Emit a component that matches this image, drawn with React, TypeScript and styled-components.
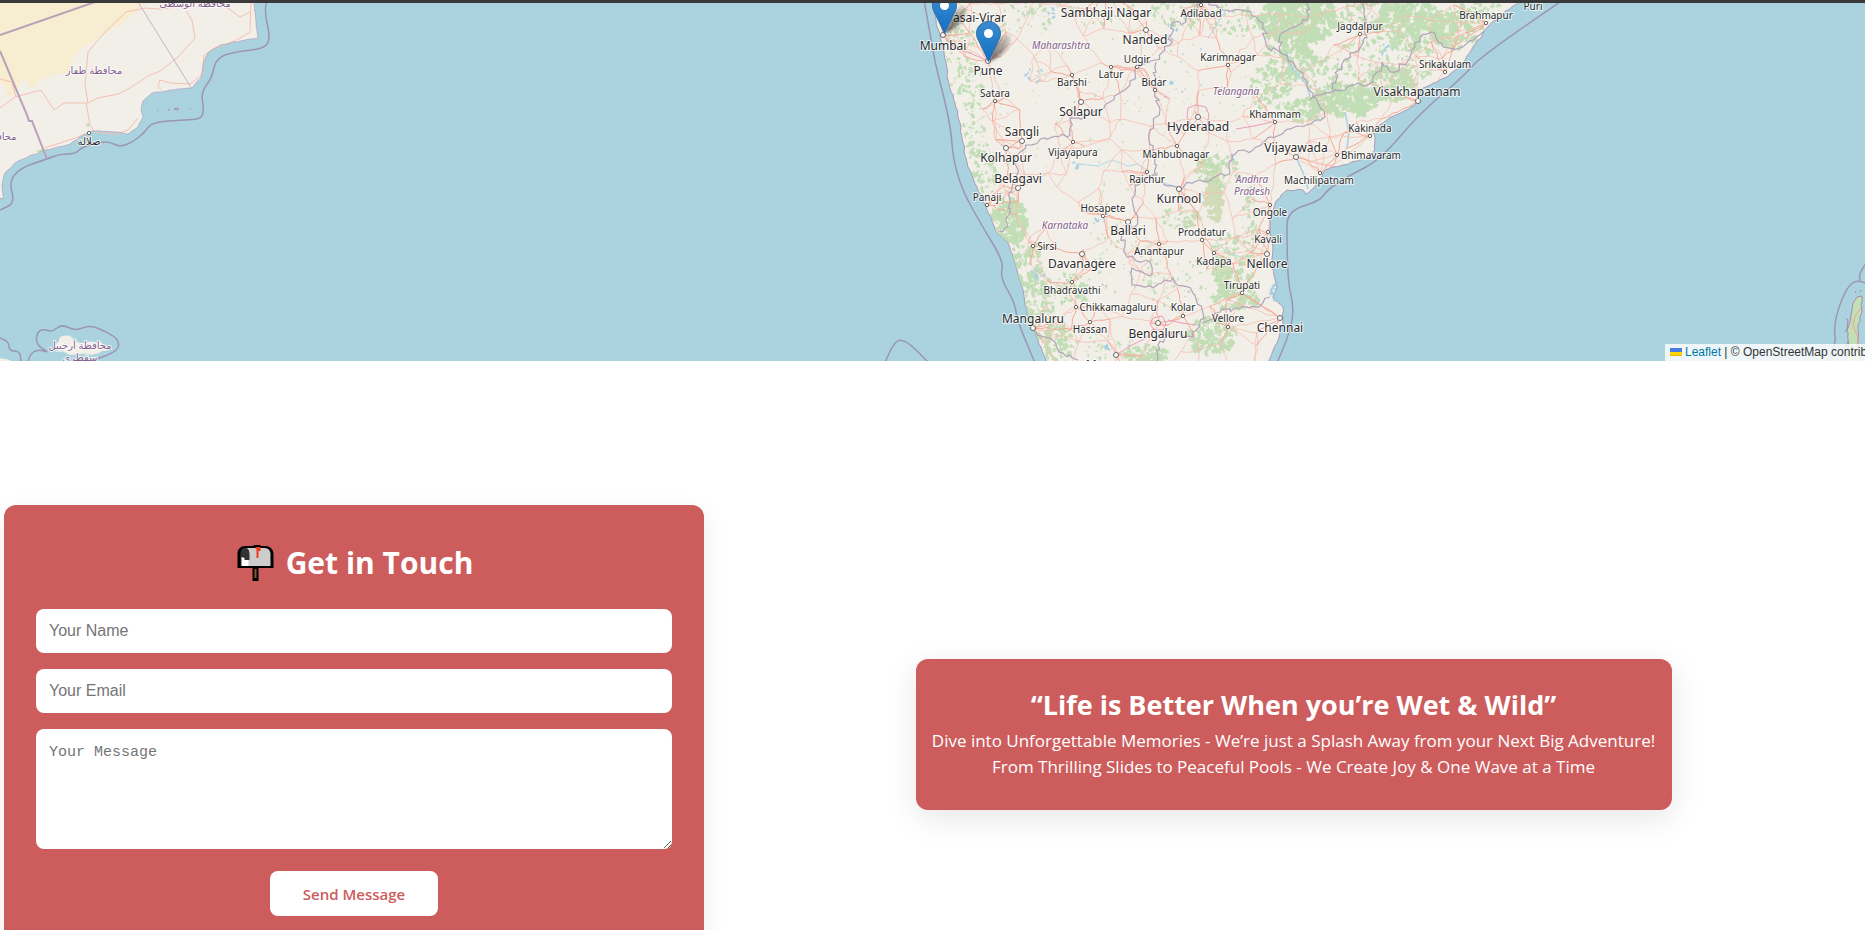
import React from 'react';
import styled, { createGlobalStyle } from 'styled-components';

const GlobalStyle = createGlobalStyle`
  *, *::before, *::after { box-sizing: border-box; }
  html { scrollbar-width: none; }
  body {
    margin: 0;
    background: #fff;
    font-family: 'Open Sans', 'Noto Sans', sans-serif;
    overflow-x: hidden;
  }
`;

/* ---------- map data ---------- */

type Point = [number, number];

const makeRandom = (seed: number) => {
  let s = seed;
  return () => {
    s = (s * 1664525 + 1013904223) % 4294967296;
    return s / 4294967296;
  };
};

const toPath = (pts: Point[], close = false) =>
  'M' + pts.map(([x, y]) => `${x.toFixed(1)} ${y.toFixed(1)}`).join('L') + (close ? 'Z' : '');

const roughen = (pts: Point[], amount: number, step: number, seed: number): Point[] => {
  const rnd = makeRandom(seed);
  const out: Point[] = [pts[0]];
  for (let i = 1; i < pts.length; i += 1) {
    const [x0, y0] = pts[i - 1];
    const [x1, y1] = pts[i];
    const n = Math.max(1, Math.round(Math.hypot(x1 - x0, y1 - y0) / step));
    for (let k = 1; k < n; k += 1) {
      const t = k / n;
      out.push([
        x0 + (x1 - x0) * t + (rnd() - 0.5) * amount,
        y0 + (y1 - y0) * t + (rnd() - 0.5) * amount,
      ]);
    }
    out.push([x1, y1]);
  }
  return out;
};

/* quadratic smoothing through the midpoints of a line */
const toSmoothPath = (pts: Point[]) => {
  let d = `M${pts[0][0]} ${pts[0][1]}`;
  for (let i = 1; i < pts.length - 1; i += 1) {
    const [x, y] = pts[i];
    const [nx, ny] = pts[i + 1];
    d += `Q${x} ${y} ${(x + nx) / 2} ${(y + ny) / 2}`;
  }
  const last = pts[pts.length - 1];
  return `${d}L${last[0]} ${last[1]}`;
};

const westCoast: Point[] = [
  [932, 0], [936, 20], [942, 43], [946, 63], [948, 80], [955, 103], [960, 123], [963, 143], [968, 167],
  [977, 187], [984, 203], [992, 220], [995, 230], [1008, 243], [1017, 270], [1023, 290], [1027, 313],
  [1032, 327], [1038, 340], [1047, 363],
];
const eastCoast: Point[] = [
  [1268, 363], [1277, 343], [1283, 323], [1283, 307], [1273, 297], [1277, 287], [1272, 267], [1273, 247],
  [1270, 230], [1271, 213], [1277, 200], [1287, 190], [1303, 190], [1306, 194], [1315, 187], [1325, 170],
  [1343, 165], [1367, 158], [1375, 150], [1375, 137], [1372, 130], [1387, 120], [1415, 105], [1423, 88],
  [1447, 77], [1463, 63], [1473, 47], [1487, 28], [1503, 13], [1523, 0],
];
const india = toPath(roughen([...westCoast, ...eastCoast], 1.6, 4, 3), true);

const omanCoast: Point[] = [
  [254, 0], [255, 12], [256, 25], [258, 38], [245, 40], [220, 45], [208, 53], [204, 62], [201, 78], [192, 88],
  [170, 90], [152, 93], [143, 101], [141, 110], [143, 117], [138, 127], [128, 134], [115, 132], [92, 131],
  [80, 137], [70, 144], [45, 150], [28, 157], [15, 163], [5, 173], [2, 185], [3, 199], [0, 198],
];
const oman = toPath([[0, 0], ...roughen(omanCoast, 1, 4, 8)], true);
const desert = toPath(
  roughen([[0, 0], [152, 0], [128, 18], [108, 32], [88, 44], [75, 55], [68, 72], [45, 77], [33, 88], [22, 79], [14, 94], [7, 97], [5, 86], [0, 84]], 2, 5, 4),
  true,
);
const socotra = toPath(roughen([[54, 347], [60, 337], [70, 336], [80, 343], [100, 341], [109, 349], [95, 354], [70, 355]], 2, 4, 6), true);
const andaman = toPath(
  roughen([[1853, 303], [1857, 297], [1862, 296], [1862, 312], [1858, 325], [1858, 343], [1861, 363], [1845, 363], [1849, 345], [1847, 330], [1850, 322]], 2, 4, 7),
  true,
);

const seaBorders: Point[][] = [
  [[267, 0], [264, 10], [270, 36], [267, 46], [255, 50], [240, 51], [216, 57], [212, 78], [201, 92], [204, 110], [201, 119], [185, 120], [152, 122], [145, 132], [133, 142], [120, 147], [110, 142], [100, 142], [82, 147], [75, 154], [60, 154], [47, 159], [20, 168], [9, 182], [15, 203], [0, 210]],
  [[924, 0], [930, 33], [935, 63], [944, 97], [951, 130], [953, 158], [962, 190], [982, 226], [1004, 262], [1000, 277], [1015, 303], [1017, 320], [1035, 363]],
  [[1563, 0], [1482, 55], [1463, 77], [1420, 113], [1380, 160], [1350, 175], [1327, 190], [1320, 201], [1287, 211], [1287, 240], [1288, 283], [1294, 308], [1290, 332], [1277, 363]],
  [[28, 363], [29, 355], [38, 349], [50, 353], [36, 345], [37, 332], [44, 329], [52, 332], [62, 324], [75, 331], [90, 325], [107, 332], [119, 340], [118, 351], [97, 359]],
  [[0, 338], [9, 341], [9, 351], [20, 351], [21, 363]],
  [[885, 363], [893, 342], [905, 339], [929, 363]],
  [[1867, 262], [1859, 273], [1860, 281]],
  [[1867, 284], [1858, 279], [1847, 287], [1837, 312], [1834, 330], [1836, 343], [1826, 363]],
];

const landBorders: Point[][] = [
  [[1200, 0], [1186, 22], [1172, 23], [1170, 45], [1155, 60], [1140, 66], [1125, 90], [1105, 105], [1085, 117], [1070, 118], [1070, 135], [1045, 138], [1030, 145], [1015, 155], [1017, 175], [1012, 187], [1008, 195], [1008, 226], [998, 231]],
  [[1156, 62], [1155, 90], [1160, 110], [1150, 130], [1152, 155], [1156, 175], [1135, 185], [1133, 205], [1137, 225], [1122, 235], [1127, 257], [1150, 262], [1152, 275], [1132, 268], [1132, 285], [1153, 288], [1173, 278], [1195, 295], [1203, 313], [1193, 337], [1172, 332], [1158, 345], [1156, 363]],
  [[1203, 322], [1220, 312], [1240, 308], [1260, 306], [1270, 297]],
  [[1035, 331], [1050, 338], [1063, 353], [1078, 360]],
  [[1200, 0], [1223, 10], [1250, 11], [1263, 23], [1267, 47], [1280, 52], [1303, 73], [1313, 97], [1325, 117], [1297, 126], [1270, 137], [1253, 150], [1232, 155], [1230, 173], [1213, 178], [1200, 180], [1180, 188], [1156, 181]],
  [[1310, 100], [1333, 92], [1347, 87], [1373, 82], [1382, 62], [1390, 72], [1407, 62], [1420, 38], [1432, 32], [1443, 47], [1460, 48], [1483, 32]],
  [[1333, 92], [1338, 70], [1363, 43], [1368, 25], [1362, 0]],
  [[1280, 52], [1282, 33], [1307, 20], [1308, 0]],
];

interface City { name: string; x: number; y: number; dx: number; dy: number; big?: boolean }

const cities: City[] = [
  { name: 'Vasai-Virar', x: 976, y: 22, dx: 942, dy: -6, big: true },
  { name: 'Mumbai', x: 943, y: 50, dx: 943, dy: 35, big: true },
  { name: 'Pune', x: 988, y: 75, dx: 988, dy: 61, big: true },
  { name: 'Sambhaji Nagar', x: 1106, y: 17, dx: 1106, dy: -8, big: true },
  { name: 'Nanded', x: 1145, y: 44, dx: 1146, dy: 30, big: true },
  { name: 'Udgir', x: 1137, y: 63, dx: 1137, dy: 67 },
  { name: 'Latur', x: 1111, y: 78, dx: 1111, dy: 67 },
  { name: 'Barshi', x: 1072, y: 86, dx: 1072, dy: 75 },
  { name: 'Bidar', x: 1154, y: 86, dx: 1155, dy: 90 },
  { name: 'Satara', x: 995, y: 97, dx: 995, dy: 101 },
  { name: 'Solapur', x: 1081, y: 116, dx: 1081, dy: 102, big: true },
  { name: 'Sangli', x: 1022, y: 136, dx: 1022, dy: 141, big: true },
  { name: 'Kolhapur', x: 1006, y: 162, dx: 1006, dy: 148, big: true },
  { name: 'Vijayapura', x: 1073, y: 156, dx: 1073, dy: 142 },
  { name: 'Mahbubnagar', x: 1176, y: 158, dx: 1177, dy: 146 },
  { name: 'Raichur', x: 1147, y: 183, dx: 1147, dy: 172 },
  { name: 'Belagavi', x: 1018, y: 183, dx: 1018, dy: 188, big: true },
  { name: 'Hyderabad', x: 1198, y: 131, dx: 1198, dy: 117, big: true },
  { name: 'Adilabad', x: 1201, y: 17, dx: 1201, dy: 5 },
  { name: 'Karimnagar', x: 1228, y: 61, dx: 1228, dy: 65 },
  { name: 'Jagdalpur', x: 1360, y: 30, dx: 1360, dy: 34 },
  { name: 'Brahmapur', x: 1486, y: 19, dx: 1486, dy: 23 },
  { name: 'Puri', x: 1533, y: 10, dx: 1533, dy: -8 },
  { name: 'Srikakulam', x: 1445, y: 68, dx: 1445, dy: 72 },
  { name: 'Visakhapatnam', x: 1417, y: 96, dx: 1418, dy: 101, big: true },
  { name: 'Khammam', x: 1275, y: 118, dx: 1275, dy: 122 },
  { name: 'Kakinada', x: 1370, y: 132, dx: 1370, dy: 136 },
  { name: 'Vijayawada', x: 1296, y: 152, dx: 1296, dy: 157, big: true },
  { name: 'Bhimavaram', x: 1371, y: 159, dx: 1337, dy: 155 },
  { name: 'Machilipatnam', x: 1319, y: 184, dx: 1320, dy: 173 },
  { name: 'Kurnool', x: 1179, y: 203, dx: 1179, dy: 189, big: true },
  { name: 'Panaji', x: 987, y: 201, dx: 987, dy: 205 },
  { name: 'Hosapete', x: 1103, y: 212, dx: 1103, dy: 216 },
  { name: 'Ballari', x: 1128, y: 235, dx: 1128, dy: 222, big: true },
  { name: 'Sirsi', x: 1047, y: 250, dx: 1033, dy: 246 },
  { name: 'Davanagere', x: 1082, y: 268, dx: 1082, dy: 254, big: true },
  { name: 'Anantapur', x: 1159, y: 255, dx: 1159, dy: 244 },
  { name: 'Proddatur', x: 1202, y: 236, dx: 1202, dy: 240 },
  { name: 'Kadapa', x: 1214, y: 265, dx: 1214, dy: 253 },
  { name: 'Nellore', x: 1267, y: 268, dx: 1267, dy: 254, big: true },
  { name: 'Ongole', x: 1270, y: 216, dx: 1270, dy: 205 },
  { name: 'Kavali', x: 1268, y: 243, dx: 1268, dy: 232 },
  { name: 'Tirupati', x: 1242, y: 289, dx: 1242, dy: 293 },
  { name: 'Bhadravathi', x: 1072, y: 294, dx: 1072, dy: 282 },
  { name: 'Chikkamagaluru', x: 1118, y: 311, dx: 1076, dy: 307 },
  { name: 'Kolar', x: 1183, y: 311, dx: 1183, dy: 316 },
  { name: 'Hassan', x: 1090, y: 333, dx: 1090, dy: 322 },
  { name: 'Mangaluru', x: 1033, y: 323, dx: 1033, dy: 328, big: true },
  { name: 'Bengaluru', x: 1158, y: 338, dx: 1158, dy: 323, big: true },
  { name: 'Vellore', x: 1228, y: 322, dx: 1228, dy: 327 },
  { name: 'Chennai', x: 1280, y: 332, dx: 1280, dy: 318, big: true },
  { name: 'Mysuru', x: 1107, y: 369, dx: 1116, dy: 355, big: true },
];

const regions = [
  { name: 'Maharashtra', x: 1061, y: 49 },
  { name: 'Telangana', x: 1236, y: 95 },
  { name: 'Karnataka', x: 1065, y: 229 },
  { name: 'Andhra', x: 1252, y: 183 },
  { name: 'Pradesh', x: 1252, y: 195 },
];

/* [cx, cy, rx, ry, patches, patch size] */
type Grove = [number, number, number, number, number, number];
const groves: Grove[] = [
  [960, 50, 14, 44, 90, 2], [974, 110, 11, 50, 90, 2], [986, 170, 12, 26, 70, 2.2], [1010, 222, 17, 24, 190, 3],
  [1026, 265, 16, 28, 100, 2.4], [1040, 305, 16, 36, 120, 2.4], [1058, 345, 16, 22, 100, 2.6], [1072, 290, 18, 18, 60, 2.2],
  [1090, 12, 50, 14, 50, 1.6], [1020, 18, 34, 20, 56, 1.8], [1180, 12, 30, 16, 70, 2.2], [1232, 20, 26, 18, 64, 2],
  [1300, 20, 42, 24, 330, 3.8], [1290, 60, 26, 20, 130, 3], [1270, 88, 22, 22, 90, 2.6], [1318, 72, 20, 20, 50, 2.2],
  [1305, 110, 22, 12, 90, 2.6], [1345, 100, 34, 17, 230, 3.2], [1390, 84, 28, 18, 150, 2.8], [1410, 25, 36, 26, 260, 3.2],
  [1455, 28, 28, 20, 150, 2.8], [1364, 60, 28, 22, 70, 2], [1370, 14, 30, 14, 80, 2.4], [1420, 62, 24, 16, 60, 2.2],
  [1480, 10, 22, 10, 50, 2], [1218, 170, 22, 16, 60, 2.6], [1180, 218, 18, 12, 30, 2], [1250, 245, 8, 60, 110, 1.9],
  [1228, 262, 16, 34, 110, 2.4], [1235, 298, 24, 12, 110, 2.5], [1212, 335, 26, 20, 170, 2.6], [1146, 355, 22, 10, 100, 2.6],
  [1180, 280, 42, 30, 90, 1.4], [1120, 262, 34, 44, 60, 1.3], [1130, 205, 54, 50, 70, 1.1], [1105, 345, 30, 14, 50, 1.5],
  [1060, 120, 70, 70, 70, 1], [1150, 100, 70, 80, 90, 1], [1240, 110, 50, 40, 40, 1],
];

const patchRandom = makeRandom(41);
const patch = ([cx, cy, rx, ry, count, size]: Grove) => {
  let d = '';
  for (let i = 0; i < count; i += 1) {
    const a = patchRandom() * Math.PI * 2;
    const r = Math.sqrt(patchRandom());
    const x = cx + Math.cos(a) * rx * r;
    const y = cy + Math.sin(a) * ry * r;
    const s = size * (0.3 + patchRandom());
    const lean = 0.6 + patchRandom() * 0.9;
    const pts: Point[] = [];
    for (let k = 0; k < 9; k += 1) {
      const t = (k / 9) * Math.PI * 2;
      const q = s * (0.3 + patchRandom());
      pts.push([x + Math.cos(t) * q, y + Math.sin(t) * q * lean]);
    }
    d += toPath(pts, true);
  }
  return d;
};
const forests = groves.map(patch).join('');
const dryForests = ([[1214, 200, 8, 24, 90, 3.4], [1222, 276, 9, 18, 50, 2.8], [1208, 172, 14, 10, 40, 2.6], [1190, 218, 12, 8, 24, 2.2]] as Grove[])
  .map(patch).join('');
const lakes = ([[1052, 13, 5, 5, 10, 2.2], [1036, 75, 12, 8, 16, 1.4], [1170, 90, 10, 8, 6, 1.5], [1077, 165, 6, 3, 10, 1.8], [1100, 219, 6, 3, 8, 1.8], [1037, 275, 7, 6, 14, 1.6], [1274, 290, 3, 10, 16, 2], [1232, 158, 5, 5, 9, 1.5], [1108, 347, 4, 3, 8, 1.7], [1387, 50, 6, 8, 12, 1.5], [1170, 30, 8, 10, 8, 1.5], [1185, 60, 30, 40, 16, 1.2]] as Grove[])
  .map(patch).join('');

const roadNodes: Point[] = (() => {
  const rnd = makeRandom(97);
  const nodes: Point[] = cities.filter((c) => c.name !== 'Puri').map((c) => [c.dx, c.dy]);
  for (let gx = 965; gx < 1500; gx += 25) {
    for (let gy = 2; gy < 370; gy += 26) {
      const x = gx + rnd() * 20;
      const y = gy + rnd() * 20;
      const left = 945 + y * 0.28;
      const right = y < 170 ? 1500 - y * 0.95 : 1272;
      if (x > left && x < right) nodes.push([x, y]);
    }
  }
  return nodes;
})();

const { minorRoads, mainRoads } = (() => {
  const seen = new Set<string>();
  let minor = '';
  let main = '';
  const cityCount = cities.length - 1;
  roadNodes.forEach(([x, y], i) => {
    const near = roadNodes
      .map(([px, py], j) => ({ j, d: Math.hypot(px - x, py - y) }))
      .filter(({ j }) => j !== i)
      .sort((a, b) => a.d - b.d)
      .slice(0, i < cityCount ? 6 : 3);
    near.forEach(({ j }, rank) => {
      const key = i < j ? `${i}-${j}` : `${j}-${i}`;
      if (seen.has(key)) return;
      seen.add(key);
      const d = toPath(roughen([[x, y], roadNodes[j]], 3, 6, i * 31 + j));
      if (i < cityCount && rank < 4) main += d;
      else minor += d;
    });
  });
  return { minorRoads: minor, mainRoads: main };
})();

const omanRoads =
  'M0 108L15 97 41 90 54 110 64 103 88 103 98 98 118 94 130 88 148 76 160 71 178 57 195 38 192 20 186 11 M88 103L85 85 88 52 105 32 126 12 145 8 160 9 182 6 M86 103L90 125 95 132 116 134 128 130 138 118 M90 132L78 137 60 143 44 148 M251 3L250 32 235 41 215 48 204 55 202 75 190 84 170 83 160 80 158 86 161 90 M225 6L240 17 250 12 M0 79L12 82 16 97';

/* ---------- map styling ---------- */

const TopEdge = styled.div`
  height: 3px;
  background: #3b3a3a;
`;

const MapFrame = styled.section`
  position: relative;
  height: 358px;
  overflow: hidden;
  background: #aad3df;
`;

const MapCanvas = styled.svg`
  display: block;
  width: 100%;
  height: 100%;
`;

const MapLabel = styled.text<{ $kind: 'big' | 'small' | 'region' | 'governorate' }>`
  font-family: 'Noto Sans', 'DejaVu Sans', sans-serif;
  font-size: ${({ $kind }) => ($kind === 'big' ? 12 : 10)}px;
  font-style: ${({ $kind }) => ($kind === 'region' ? 'italic' : 'normal')};
  fill: ${({ $kind }) => ($kind === 'big' || $kind === 'small' ? '#2b2b2b' : '#86608c')};
  text-anchor: middle;
  paint-order: stroke;
  stroke: rgba(255, 255, 255, 0.75);
  stroke-width: 2px;
  stroke-linejoin: round;
`;

const Attribution = styled.div`
  position: absolute;
  right: 0;
  bottom: 0;
  width: 200px;
  height: 17px;
  padding-left: 5px;
  overflow: hidden;
  white-space: nowrap;
  background: rgba(255, 255, 255, 0.8);
  color: #333;
  font: 12px/17px 'Liberation Sans', Arial, sans-serif;
`;

const LeafletLink = styled.a`
  color: #0078a8;
  text-decoration: none;
`;

const Flag = styled.svg`
  width: 12px;
  height: 8px;
  margin-right: 3px;
`;

const Pin = ({ x, y }: { x: number; y: number }) => (
  <g transform={`translate(${x} ${y})`}>
    <path d="M13 41C16 30 20 20 27 15c5-3 10 0 7 7C31 30 22 37 13 41z" fill="url(#pinShadow)" filter="url(#pinBlur)" />
    <path
      d="M12.5.5C5.8.5.5 5.900.5 12.500c0 2.600.8 5 2.200 7.300L12.500 40.500l9.800-20.700c1.400-2.300 2.200-4.700 2.200-7.300C24.500 5.900 19.200.5 12.500.5z"
      fill="url(#pinFill)"
      stroke="#2e6fa8"
    />
    <circle cx="12.5" cy="12.5" r="4.5" fill="#fff" />
  </g>
);

const ParkMap = () => (
  <MapFrame aria-label="Map of our parks">
    <MapCanvas viewBox="0 3 1865 358" preserveAspectRatio="xMidYMid slice" role="img">
      <defs>
        <clipPath id="landClip"><path d={india} /></clipPath>
        <linearGradient id="pinFill" x1="0" y1="0" x2="0" y2="1">
          <stop offset="0" stopColor="#3a8ccc" />
          <stop offset="1" stopColor="#126fc6" />
        </linearGradient>
        <linearGradient id="pinShadow" x1="0" y1="1" x2="1" y2="0">
          <stop offset="0" stopColor="#000" stopOpacity="0.6" />
          <stop offset="1" stopColor="#000" stopOpacity="0.1" />
        </linearGradient>
        <filter id="pinBlur" x="-30%" y="-30%" width="160%" height="160%">
          <feGaussianBlur stdDeviation="1.5" />
        </filter>
      </defs>

      <path d={oman} fill="#f2efe9" />
      <path d={desert} fill="#f7edd0" />
      <path d={omanRoads} fill="none" stroke="#f6bfb1" strokeLinejoin="round" />
      <path d="M36 151l6-2 3 1-4 3zM86 124l3-1 1 3-3 1z" fill="#c3dfb5" />
      <path d="M174 109l2-1 3 1-2 1zM168 110h2M157 110h1M190 109h1" fill="#f2efe9" stroke="#a58bae" />
      <path d={toPath(roughen(omanCoast, 1, 4, 8))} fill="none" stroke="#a58bae" strokeOpacity="0.5" />
      <path d="M0 35L95 2M0 51L27 115 29 121 32 121 47 159" fill="none" stroke="#b9a0b8" strokeWidth="2" />
      <path d="M138 2L192 89" fill="none" stroke="#c5b1c5" />
      <path d={socotra} fill="#f2efe9" />
      <path d="M0 358l10 2 3 3H0z" fill="#f2efe9" />
      <path d={andaman} fill="#c3dfb5" stroke="#a58bae" />
      <path d="M1861 308l-6 8-2 10 6 14-4 12" fill="none" stroke="#f0a58f" />
      <path d="M1855 291l1 2M1860 290l1 2M1846 318l2 2-1 9-2 3M1848 341l-2 6" fill="none" stroke="#a58bae" />

      <path d={india} fill="#f2efe9" stroke="#a79bb8" />
      <g clipPath="url(#landClip)">
        <path d={dryForests} fill="#d0dcb8" />
        <path d={forests} fill="#bddbb0" fillOpacity="0.9" />
        <path d={lakes} fill="#a4d1e3" />
        <path d="M1286 52L1292 68 1306 84 1310 96M1296 157l8 18 4 14M1345 112l4 20-2 16" fill="none" stroke="#a9d3e4" strokeWidth="1.6" />
        <path d="M1150 172l-12-8-10 2-16-6-14 6-20-2M1180 188l-20-6M1215 240l12 12 16 6M1226 10l-10 16-8 12" fill="none" stroke="#b5d9e6" />
        <path d={minorRoads} fill="none" stroke="#f8bfb0" strokeWidth="0.8" />
        <path d={mainRoads} fill="none" stroke="#f5a896" />
        {landBorders.map((line, i) => (
          <path key={i} d={toPath(roughen(line, 5, 4, i + 60))} fill="none" stroke="#b3a3b8" strokeWidth="1.2" />
        ))}
        <path d="M1188 108l8-3 10 2 3 8-2 10-8 3-9-4-3-8zM1153 318l9-2 4 7-3 7-9 0-4-6zM1116 355l14-9 16-8 8-10M1168 320l14 3 14 2M1236 129l18-3 18-4M944 36l10 12 16 5 16 7" fill="none" stroke="#ee9ab4" />
      </g>

      {seaBorders.map((line, i) => (
        <path key={i} d={toSmoothPath(line)} fill="none" stroke="#9c95b3" strokeWidth="1.5" strokeLinejoin="round" />
      ))}

      {cities.map((c) => (
        <circle key={c.name} cx={c.dx} cy={c.dy} r={c.big ? 2.5 : 1.7} fill="#fff" stroke="#666" />
      ))}
      <circle cx="89" cy="133" r="1.7" fill="#fff" stroke="#666" />
      {cities.map((c) => (
        <MapLabel key={c.name} $kind={c.big ? 'big' : 'small'} x={c.x} y={c.y}>{c.name}</MapLabel>
      ))}
      {regions.map((r) => (
        <MapLabel key={r.name} $kind="region" x={r.x} y={r.y}>{r.name}</MapLabel>
      ))}
      <MapLabel $kind="governorate" x={195} y={7}>محافظة الوسطى</MapLabel>
      <MapLabel $kind="governorate" x={94} y={74}>محافظة ظفار</MapLabel>
      <MapLabel $kind="governorate" x={0} y={140}>محافظة</MapLabel>
      <MapLabel $kind="small" x={89} y={145}>صلالة</MapLabel>
      <MapLabel $kind="governorate" x={80} y={349}>محافظة أرخبيل</MapLabel>
      <MapLabel $kind="governorate" x={80} y={361}>سقطرى</MapLabel>

      <Pin x={932} y={-7} />
      <Pin x={976} y={21} />
    </MapCanvas>
    <Attribution>
      <LeafletLink href="https://leafletjs.com">
        <Flag viewBox="0 0 12 8" aria-hidden="true">
          <path fill="#4C7BE1" d="M0 0h12v4H0z" />
          <path fill="#FFD500" d="M0 4h12v3H0z" />
          <path fill="#E0BC00" d="M0 7h12v1H0z" />
        </Flag>
        Leaflet
      </LeafletLink>
      {' | © OpenStreetMap contributors'}
    </Attribution>
  </MapFrame>
);

/* ---------- contact section ---------- */

const Contact = styled.section`
  display: flex;
  align-items: center;
  padding: 144px 0 40px 4px;
`;

const FormCard = styled.form`
  flex: 0 0 700px;
  display: flex;
  flex-direction: column;
  gap: 16px;
  padding: 34px 32px 48px;
  border-radius: 12px;
  background: #cd5c5c;
  box-shadow: 0 8px 24px rgba(0, 0, 0, 0.08);
`;

const FormTitle = styled.h2`
  display: flex;
  align-items: center;
  justify-content: center;
  gap: 12px;
  margin: 0 0 6px;
  padding-left: 2px;
  color: #fff;
  font-size: 30px;
  line-height: 48px;
  font-weight: 700;
`;

const MailboxIcon = styled.svg`
  width: 37px;
  height: 38px;
`;

const Field = styled.input`
  width: 100%;
  height: 44px;
  padding: 0 13px;
  border: 0;
  border-radius: 8px;
  background: #fff;
  font: 16px 'Liberation Sans', Arial, sans-serif;
  &::placeholder { color: #757575; opacity: 1; }
`;

const MessageField = styled.textarea`
  display: block;
  width: 100%;
  height: 120px;
  padding: 15px 13px;
  border: 0;
  border-radius: 8px;
  background: #fff;
  font: 15px/18px 'Liberation Mono', monospace;
  resize: vertical;
  &::placeholder { color: #757575; opacity: 1; }
`;

const SendButton = styled.button`
  align-self: center;
  width: 168px;
  height: 45px;
  margin-top: 6px;
  border: 0;
  border-radius: 8px;
  background: #fff;
  color: #cd5c5c;
  font: 600 15px 'Open Sans', 'Noto Sans', sans-serif;
  cursor: pointer;
`;

const QuoteColumn = styled.div`
  flex: 1;
  display: flex;
  justify-content: center;
  padding-left: 18px;
`;

const QuoteCard = styled.div`
  width: 756px;
  padding: 28px 0 30px;
  border-radius: 12px;
  background: #cd5c5c;
  box-shadow: 0 8px 32px rgba(0, 0, 0, 0.1);
  color: #fff;
  text-align: center;
`;

const QuoteTitle = styled.h3`
  margin: 0 0 5px;
  font-size: 27px;
  line-height: 36px;
  font-weight: 700;
`;

const QuoteText = styled.p`
  margin: 0;
  font-size: 17px;
  line-height: 26px;
`;

const Mailbox = () => (
  <MailboxIcon viewBox="0 0 36 38" aria-hidden="true">
    <path d="M8 2h8V1h7v1h5c5 0 8 4 8 8v14H21v13h-6V24H0V10c0-5 3-8 8-8z" fill="#000" />
    <path d="M9 4h18c4 0 6 3 6 6v12H9z" fill="#ccc" />
    <path d="M3 22V10c0-4 2-6 5-6 3 0 4 3 4 7v5H5v6z" fill="#333" />
    <path d="M4 13l3 1v2h4v6H4z" fill="#fff" />
    <path d="M18 3h5v4h-2v7h-2V5h-1z" fill="#f03a17" />
    <path d="M17 25h2v9h-2z" fill="#8e562e" />
  </MailboxIcon>
);

const App = () => (
  <>
    <GlobalStyle />
    <TopEdge />
    <main>
      <ParkMap />
      <Contact>
        <FormCard onSubmit={(e: React.FormEvent) => e.preventDefault()}>
          <FormTitle><Mailbox />Get in Touch</FormTitle>
          <Field type="text" placeholder="Your Name" aria-label="Your Name" />
          <Field type="email" placeholder="Your Email" aria-label="Your Email" />
          <MessageField placeholder="Your Message" aria-label="Your Message" />
          <SendButton type="submit">Send Message</SendButton>
        </FormCard>
        <QuoteColumn>
          <QuoteCard>
            <QuoteTitle>“Life is Better When you’re Wet &amp; Wild”</QuoteTitle>
            <QuoteText>
              Dive into Unforgettable Memories - We’re just a Splash Away from your Next Big Adventure!
              <br />
              From Thrilling Slides to Peaceful Pools - We Create Joy &amp; One Wave at a Time
            </QuoteText>
          </QuoteCard>
        </QuoteColumn>
      </Contact>
    </main>
  </>
);

export default App;
